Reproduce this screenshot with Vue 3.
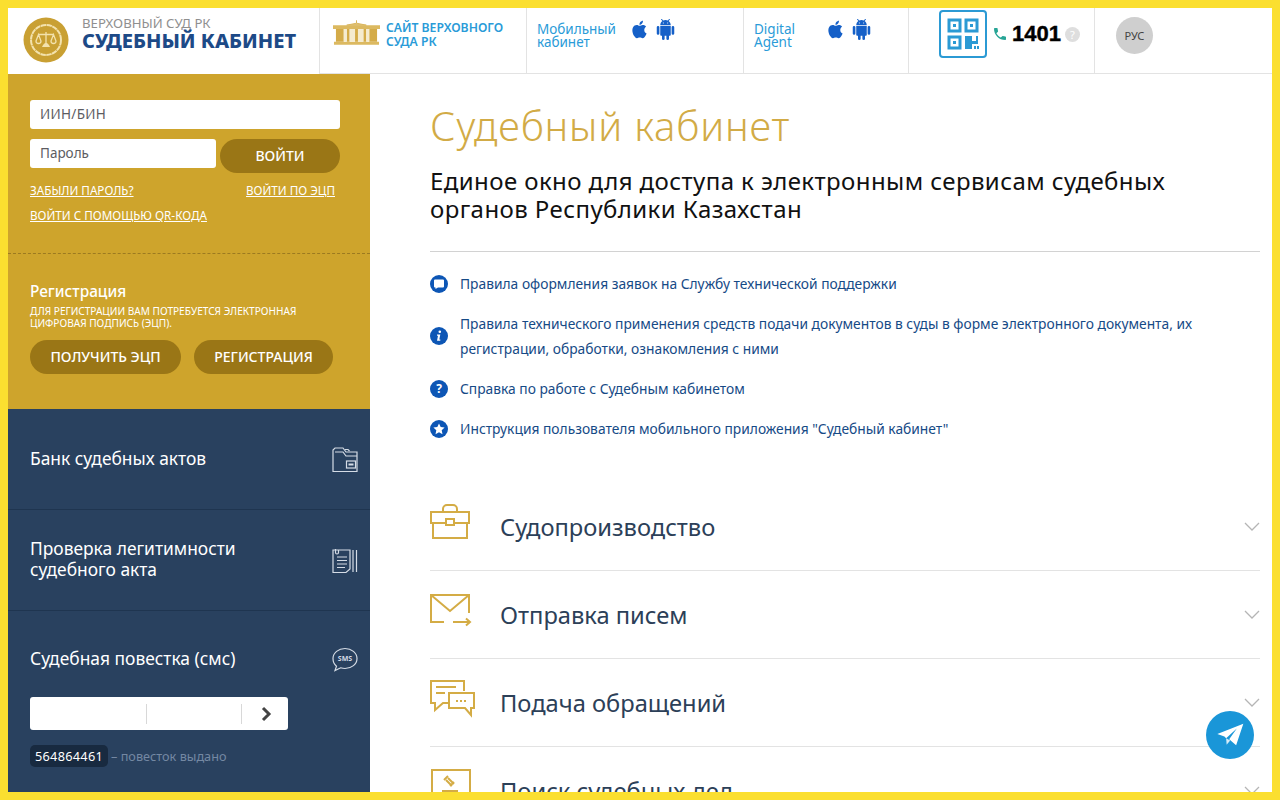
<template>
  <div class="page">
    <header class="top">
      <div class="cell brand">
        <svg class="logo" viewBox="0 0 46 46">
          <circle cx="23" cy="23" r="22.500" fill="#c9a033" />
          <circle cx="23" cy="23" r="15" fill="none" stroke="#f3e2ad" stroke-width="2" stroke-dasharray="5.400 .5" />
          <g fill="none" stroke="#f3e2ad" stroke-width="1.300">
            <path d="M23 15v13M15.500 17.500h15" />
            <path d="M13 24l2.500-6.500 2.500 6.500a2.500 2.500 0 0 1-5 0zM28 24l2.500-6.500 2.500 6.500a2.500 2.500 0 0 1-5 0z" />
          </g>
          <path d="M23 26c2 0 3 2 4 4h-8c1-2 2-4 4-4z" fill="#f3e2ad" />
        </svg>
        <div class="brand-text">
          <div class="brand-sub">ВЕРХОВНЫЙ СУД РК</div>
          <div class="brand-name">СУДЕБНЫЙ КАБИНЕТ</div>
        </div>
      </div>

      <a class="cell site">
        <svg class="building" viewBox="0 0 48 26">
          <path d="M24 0v3M14 5l10-2 10 2z" stroke="#d9b45a" stroke-width="1" fill="#e2c57c" />
          <path d="M0 5h48v4H0zM1 22h46v3H1z" fill="#dcb960" />
          <path d="M3 9h8v13H3zM37 9h8v13h-8z" fill="#d4ab48" />
          <path d="M14 9h3v13h-3zM22.500 9h3v13h-3zM31 9h3v13h-3z" fill="#d4ab48" />
          <path d="M11 9h3v13h-3zM17 9h5.500v13H17zM25.500 9H31v13h-5.500zM34 9h3v13h-3z" fill="#f5ebcf" />
        </svg>
        <span>САЙТ ВЕРХОВНОГО<br />СУДА РК</span>
      </a>

      <div class="cell app mobile">
        <span class="app-name">Мобильный<br />кабинет</span>
        <svg class="os" viewBox="0 0 24 24"><path :d="applePath" /></svg>
        <svg class="os" viewBox="0 0 24 24"><path :d="androidPath" /></svg>
      </div>

      <div class="cell app digital">
        <span class="app-name">Digital<br />Agent</span>
        <svg class="os" viewBox="0 0 24 24"><path :d="applePath" /></svg>
        <svg class="os" viewBox="0 0 24 24"><path :d="androidPath" /></svg>
      </div>

      <div class="cell phone">
        <div class="qr">
          <svg viewBox="0 0 32 32" width="32" height="32" fill="none" stroke="#2b9ad4" stroke-width="3">
            <rect x="2" y="2" width="11" height="11" />
            <rect x="19" y="2" width="11" height="11" />
            <rect x="2" y="19" width="11" height="11" />
            <path d="M6 6h3v3H6zM23 6h3v3h-3zM6 23h3v3H6z" fill="#2b9ad4" stroke="none" />
            <path d="M18 18h7v5h4v-5h2v8h-6v5h-7z" fill="#2b9ad4" stroke="none" />
            <path d="M27 28h2v3h-2zM30 28h2v3h-2z" fill="#2b9ad4" stroke="none" />
          </svg>
        </div>
        <svg class="tube" viewBox="0 0 24 24"><path d="M6.600 10.800c1.400 2.800 3.800 5.100 6.600 6.600l2.200-2.200c.3-.3.7-.4 1-.2 1.100.4 2.300.6 3.600.6.600 0 1 .4 1 1V20c0 .6-.4 1-1 1C10.600 21 3 13.400 3 4c0-.6.4-1 1-1h3.500c.6 0 1 .4 1 1 0 1.300.2 2.500.6 3.600.1.300 0 .7-.2 1z" /></svg>
        <span class="number">1401</span>
        <span class="hint">?</span>
      </div>

      <div class="cell lang">
        <span class="lang-btn">РУС</span>
      </div>
    </header>

    <div class="body">
      <aside class="side">
        <section class="login">
          <input class="field wide" placeholder="ИИН/БИН" />
          <div class="pass-row">
            <input class="field pass" placeholder="Пароль" />
            <button class="pill enter">ВОЙТИ</button>
          </div>
          <div class="link-row">
            <a>ЗАБЫЛИ ПАРОЛЬ?</a>
            <a class="ecp">ВОЙТИ ПО ЭЦП</a>
          </div>
          <a class="qr-link">ВОЙТИ С ПОМОЩЬЮ QR-КОДА</a>
        </section>

        <section class="reg">
          <h3>Регистрация</h3>
          <p>ДЛЯ РЕГИСТРАЦИИ ВАМ ПОТРЕБУЕТСЯ ЭЛЕКТРОННАЯ<br />ЦИФРОВАЯ ПОДПИСЬ (ЭЦП).</p>
          <div class="reg-btns">
            <button class="pill get">ПОЛУЧИТЬ ЭЦП</button>
            <button class="pill signup">РЕГИСТРАЦИЯ</button>
          </div>
        </section>

        <nav class="nav">
          <a class="nav-item">
            <span>Банк судебных актов</span>
            <svg class="nav-ico" viewBox="0 0 26 26" fill="none" stroke="#d5dce6" stroke-width="1.200">
              <path d="M1 24.500V3l2-2h8l3 4h11v19.500z" />
              <path d="M3 5h8l3 4h11M13 2.500h3l1.500 1.500" />
              <rect x="14.500" y="14" width="9" height="7" />
              <path d="M16.500 17.500h5" stroke-width="2" />
            </svg>
          </a>
          <a class="nav-item">
            <span>Проверка легитимности<br />судебного акта</span>
            <svg class="nav-ico" viewBox="0 0 26 26" fill="none" stroke="#d5dce6" stroke-width="1.200">
              <path d="M1 2h17v19l-4 3.500H1z" />
              <path d="M5 9h10M5 12.500h10M5 16h10M5 19.500h8M21 2v22M24.500 2v22" />
              <path d="M3.500 1v3.500a1.500 1.500 0 0 0 3 0V2" />
            </svg>
          </a>
          <div class="nav-item sms">
            <div class="sms-head">
              <span>Судебная повестка (смс)</span>
              <svg class="nav-ico" viewBox="0 0 26 26" fill="none" stroke="#d5dce6" stroke-width="1.200">
                <path d="M13 1.500c6.500 0 12 4.300 12 10s-5.500 10-12 10c-1.500 0-3-.3-4.300-.7L3 23.500l1.500-4.200C2.300 17.500 1 14.800 1 11.500c0-5.700 5.500-10 12-10z" />
                <text x="13" y="14.300" class="sms-txt">SMS</text>
              </svg>
            </div>
            <div class="sms-box">
              <span class="cellnum"></span>
              <span class="cellnum"></span>
              <svg class="go" viewBox="0 0 12 16"><path d="M3 2l6 6-6 6" fill="none" stroke="#444" stroke-width="3" /></svg>
            </div>
            <div class="stat"><b>564864461</b> <span>– повесток выдано</span></div>
          </div>
        </nav>
      </aside>

      <main class="main">
        <h1>Судебный кабинет</h1>
        <h2>Единое окно для доступа к электронным сервисам судебных органов Республики Казахстан</h2>
        <ul class="docs">
          <li v-for="d in docs" :key="d.kind">
            <svg class="doc-ico" viewBox="0 0 18 18">
              <circle cx="9" cy="9" r="9" fill="#0d56b5" />
              <path v-if="d.kind === 'chat'" d="M5 4.500h8a1 1 0 0 1 1 1v6a1 1 0 0 1-1 1H8l-2.500 1.500v-1.500H5a1 1 0 0 1-1-1v-6a1 1 0 0 1 1-1z" fill="#fff" />
              <path v-if="d.kind === 'info'" d="M9.800 3.500a1.300 1.300 0 1 1 0 2.600 1.300 1.300 0 0 1 0-2.600zM7 7.600h3.300l-1 5h1v1.200H7l1-5H7z" fill="#fff" />
              <text v-if="d.kind === 'help'" x="9" y="13.300" class="q">?</text>
              <path v-if="d.kind === 'star'" d="M9 3.500l1.700 3.600 3.900.5-2.900 2.700.8 3.900L9 12.300l-3.500 1.900.8-3.900L3.400 7.600l3.900-.5z" fill="#fff" />
            </svg>
            <a>{{ d.text }}</a>
          </li>
        </ul>
        <div class="acc">
          <div v-for="s in sections" :key="s.title" class="acc-row">
            <svg class="acc-ico" viewBox="0 0 46 40" fill="none" stroke="#d4ac45" stroke-width="2">
              <template v-if="s.icon === 'case'">
                <path d="M1 9h38v11H1zM3 20v15h34V20M13 9V6a4 4 0 0 1 4-4h6a4 4 0 0 1 4 4v3" />
                <rect x="16" y="16" width="8" height="6" fill="#fff" />
              </template>
              <template v-if="s.icon === 'mail'">
                <path d="M39 22V4H1v27h13M1 4l19 16L39 4M23 31h9" />
                <path d="M32 31h7M36 27.500l4 3.500-4 3.500" />
              </template>
              <template v-if="s.icon === 'talk'">
                <path d="M34 12V2H1v22h4v7l8-7h5" />
                <path d="M19 14h25v15h-3v7l-6-7H19zM6 8h20M6 14h9" />
                <path d="M26 22h2M30 22h2M34 22h2" />
              </template>
              <template v-if="s.icon === 'search'">
                <path d="M2 3h38v27H2z" />
                <path d="M12 24h16M22 19l-6-6M18 11l6 6M14 13l4-4M20 19l4-4" />
              </template>
            </svg>
            <span class="acc-title">{{ s.title }}</span>
            <svg class="chev" viewBox="0 0 16 10"><path d="M1 1l7 7 7-7" fill="none" stroke="#b5b5b5" stroke-width="1.300" /></svg>
          </div>
        </div>
      </main>
    </div>

    <a class="tg">
      <svg viewBox="0 0 24 24" width="32" height="32"><path d="M22 3.500L2.500 11.200l5.300 2 1.300 1.200 8-7.200-5.700 8 5.200 4.500z" fill="#fff" /><path d="M9.100 14.400l.4 5 2.600-3.200z" fill="#d6ecf8" /></svg>
    </a>
  </div>
</template>

<script setup>
const applePath = 'M18.710 19.500c-.83 1.240-1.710 2.450-3.050 2.470-1.340.03-1.770-.79-3.290-.79-1.530 0-2 .77-3.270.82-1.310.05-2.300-1.320-3.140-2.530C4.250 17 2.940 12.450 4.700 9.390c.87-1.520 2.430-2.480 4.120-2.510 1.280-.02 2.500.87 3.290.87.78 0 2.260-1.070 3.810-.91.65.03 2.470.26 3.640 1.980-.09.06-2.170 1.280-2.150 3.810.03 3.020 2.650 4.030 2.680 4.040-.03.07-.42 1.440-1.380 2.830M13 3.500c.73-.83 1.940-1.460 2.940-1.500.13 1.170-.34 2.350-1.040 3.190-.69.85-1.830 1.510-2.950 1.420-.15-1.150.41-2.350 1.050-3.110z'
const androidPath = 'M15,5H14V4H15M10,5H9V4H10M15.530,2.160L16.840,.85C17.030,.66 17.030,.34 16.840,.14C16.640,-.05 16.320,-.05 16.130,.14L14.650,1.620C13.850,1.230 12.950,1 12,1C11.040,1 10.140,1.230 9.340,1.630L7.850,.14C7.660,-.05 7.340,-.05 7.150,.14C6.950,.34 6.950,.66 7.150,.85L8.460,2.160C6.970,3.260 6,5 6,7H18C18,5 17,3.250 15.530,2.160M20.500,8A1.500,1.500 0 0,0 19,9.500V16.500A1.500,1.500 0 0,0 20.500,18A1.500,1.500 0 0,0 22,16.500V9.500A1.500,1.500 0 0,0 20.500,8M3.500,8A1.500,1.500 0 0,0 2,9.500V16.500A1.500,1.500 0 0,0 3.500,18A1.500,1.500 0 0,0 5,16.500V9.500A1.500,1.500 0 0,0 3.500,8M6,18A1,1 0 0,0 7,19H8V22.500A1.500,1.500 0 0,0 9.500,24A1.500,1.500 0 0,0 11,22.500V19H13V22.500A1.500,1.500 0 0,0 14.500,24A1.500,1.500 0 0,0 16,22.500V19H17A1,1 0 0,0 18,18V8H6V18Z'

const docs = [
  { kind: 'chat', text: 'Правила оформления заявок на Службу технической поддержки' },
  { kind: 'info', text: 'Правила технического применения средств подачи документов в суды в форме электронного документа, их регистрации, обработки, ознакомления с ними' },
  { kind: 'help', text: 'Справка по работе с Судебным кабинетом' },
  { kind: 'star', text: 'Инструкция пользователя мобильного приложения "Судебный кабинет"' }
]

const sections = [
  { title: 'Судопроизводство', icon: 'case' },
  { title: 'Отправка писем', icon: 'mail' },
  { title: 'Подача обращений', icon: 'talk' },
  { title: 'Поиск судебных дел', icon: 'search' }
]
</script>

<style>
html, body {
  margin: 0;
  background: #fff;
}
</style>

<style scoped>
.page {
  position: relative;
  box-sizing: border-box;
  width: 1280px;
  height: 800px;
  border: 8px solid #fbdf30;
  overflow: hidden;
  background: #fff;
  font-family: "Noto Sans", "Open Sans", sans-serif;
  color: #25405f;
}

/* шапка */
.top {
  display: flex;
  height: 66px;
  box-sizing: border-box;
}
.cell {
  display: flex;
  box-sizing: border-box;
  border-right: 1px solid #e3e3e3;
  border-bottom: 1px solid #e3e3e3;
}
.brand {
  width: 312px;
  align-items: center;
  padding: 0 0 2px 15px;
  border-bottom: none;
}
.logo {
  width: 46px;
  height: 46px;
  margin-right: 13px;
}
.brand-text {
  margin-bottom: 12px;
}
.brand-sub {
  font-size: 13.200px;
  line-height: 14px;
  color: #8f8f8f;
  white-space: nowrap;
}
.brand-name {
  font-size: 20px;
  line-height: 22px;
  font-weight: 800;
  color: #1d4a87;
  white-space: nowrap;
}
.site {
  width: 207px;
  padding: 13px 0 0 13px;
  font-size: 12.200px;
  line-height: 14px;
  font-weight: 600;
  color: #2a9bd8;
}
.building {
  width: 47px;
  height: 26px;
  margin: -1px 6px 0 0;
}
.app {
  padding: 15px 0 0 10px;
  gap: 5px;
}
.mobile { width: 217px; }
.digital { width: 165px; }
.app-name {
  font-size: 13.500px;
  line-height: 13px;
  color: #2a9bd8;
}
.mobile .app-name { width: 87px; }
.digital .app-name { width: 66px; }
.os {
  width: 21px;
  height: 21px;
  margin-top: -4px;
  fill: #1560c8;
}
.phone {
  width: 186px;
  align-items: center;
  padding: 0 0 13px 30px;
}
.qr {
  display: flex;
  align-items: center;
  justify-content: center;
  flex: none;
  box-sizing: border-box;
  width: 48px;
  height: 48px;
  border: 2px solid #2b9ad4;
  border-radius: 4px;
  margin-right: 5px;
}
.tube {
  width: 16px;
  height: 16px;
  fill: #27a596;
  margin-right: 4px;
}
.number {
  font-family: "Liberation Sans", sans-serif;
  font-size: 22px;
  font-weight: 700;
  color: #000;
  -webkit-text-stroke: .4px #000;
}
.hint {
  width: 15px;
  height: 15px;
  margin-left: 4px;
  border-radius: 50%;
  background: #dedede;
  color: #fff;
  font-size: 11px;
  line-height: 15px;
  text-align: center;
}
.lang {
  flex: 1;
  align-items: center;
  padding: 0 0 11px 21px;
  border-right: none;
}
.lang-btn {
  width: 37px;
  height: 37px;
  border-radius: 50%;
  background: #cfcfcf;
  color: #444;
  font-size: 11px;
  line-height: 37px;
  text-align: center;
}

/* левая колонка */
.body {
  display: flex;
  align-items: flex-start;
}
.side {
  flex: none;
  width: 362px;
}
.login {
  height: 180px;
  box-sizing: border-box;
  padding: 26px 30px 0 22px;
  background: #cea42c;
  border-bottom: 1px dashed #9c7a20;
}
.field {
  display: block;
  box-sizing: border-box;
  height: 29px;
  padding: 0 10px 2px;
  border: none;
  outline: none;
  border-radius: 3px;
  background: #fff;
  font: 13.500px "Noto Sans", sans-serif;
}
.field::placeholder {
  color: #5c5c62;
  opacity: 1;
}
.wide {
  width: 310px;
  letter-spacing: .3px;
}
.pass-row {
  display: flex;
  align-items: flex-start;
  gap: 4px;
  margin-top: 10px;
}
.pass {
  width: 186px;
}
.pill {
  height: 34px;
  padding: 0 0 2px;
  border: none;
  border-radius: 17px;
  background: #9a7616;
  color: #fff;
  font: 500 14px "Noto Sans", sans-serif;
}
.enter {
  width: 120px;
}
.link-row {
  display: flex;
  justify-content: space-between;
  margin: 10px 5px 0 0;
}
.login a {
  font-size: 11.700px;
  line-height: 15px;
  color: #fff;
  text-decoration: underline;
}
.qr-link {
  display: block;
  margin-top: 10px;
}
.reg {
  height: 155px;
  box-sizing: border-box;
  padding: 28px 22px 0;
  background: #cea42c;
  color: #fff;
}
.reg h3 {
  margin: 0;
  font-size: 15.400px;
  line-height: 20px;
  font-weight: 500;
}
.reg p {
  margin: 3px 0 0;
  font-size: 10.100px;
  line-height: 12px;
  white-space: nowrap;
}
.reg-btns {
  display: flex;
  gap: 13px;
  margin-top: 11px;
}
.get { width: 151px; }
.signup { width: 139px; }

.nav {
  background: #29415f;
  color: #fff;
  padding-bottom: 30px;
}
.nav-item {
  display: flex;
  align-items: center;
  justify-content: space-between;
  box-sizing: border-box;
  height: 101px;
  padding: 0 12px 2px 22px;
  border-bottom: 1px solid #1f3550;
  font-size: 17.400px;
  line-height: 21px;
}
.nav-ico {
  flex: none;
  width: 26px;
  height: 26px;
  margin-top: 3px;
}
.sms-txt {
  font: 700 7px "Noto Sans", sans-serif;
  fill: #d5dce6;
  stroke: none;
  text-anchor: middle;
}
.sms {
  display: block;
  height: auto;
  padding-top: 33px;
  border-bottom: none;
}
.sms-head {
  display: flex;
  align-items: center;
  justify-content: space-between;
}
.sms-box {
  display: flex;
  align-items: center;
  box-sizing: border-box;
  width: 258px;
  height: 33px;
  margin-top: 24px;
  border-radius: 3px;
  background: #fff;
}
.cellnum {
  width: 94px;
  height: 20px;
  border-right: 1px solid #d8d8d8;
}
.cellnum + .cellnum {
  margin-right: 18px;
}
.cellnum:first-child {
  width: 116px;
}
.go {
  width: 12px;
  height: 16px;
}
.stat {
  display: flex;
  align-items: center;
  gap: 3px;
  margin-top: 15px;
  font-size: 12.700px;
}
.stat b {
  padding: 0 5px;
  height: 22px;
  line-height: 22px;
  border-radius: 5px;
  background: #182a40;
  font-weight: 400;
  letter-spacing: .3px;
}
.stat span {
  color: #7488a3;
}

/* основная часть */
.main {
  flex: 1;
  min-width: 0;
  padding: 0 12px 0 60px;
}
h1 {
  margin: 24px 0 0;
  font-size: 40px;
  line-height: 56px;
  font-weight: 300;
  letter-spacing: .8px;
  color: #d2ab46;
}
h2 {
  margin: 13px 0 0;
  padding: 0 60px 28px 0;
  border-bottom: 1px solid #d2d2d2;
  font-size: 24px;
  line-height: 28px;
  font-weight: 400;
  letter-spacing: .42px;
  color: #111;
}
.docs {
  list-style: none;
  margin: 19px 0 0;
  padding: 0;
}
.docs li {
  display: flex;
  align-items: center;
  gap: 12px;
  margin-bottom: 15px;
  font-size: 13.800px;
  line-height: 25px;
  color: #164a86;
}
.doc-ico {
  flex: none;
  width: 18px;
  height: 18px;
}
.q {
  font: 700 12px "Noto Sans", sans-serif;
  fill: #fff;
  text-anchor: middle;
}
.acc {
  margin-top: 42px;
}
.acc-row {
  display: flex;
  align-items: center;
  height: 88px;
  box-sizing: border-box;
  border-bottom: 1px solid #e3e3e3;
}
.acc-ico {
  flex: none;
  width: 46px;
  height: 40px;
  margin: 0 24px 8px 0;
}
.acc-title {
  flex: 1;
  font-size: 23.700px;
  color: #2c4058;
}
.chev {
  width: 16px;
  height: 10px;
}

.tg {
  position: absolute;
  right: 18px;
  bottom: 33px;
  display: flex;
  align-items: center;
  justify-content: center;
  width: 48px;
  height: 48px;
  border-radius: 50%;
  background: #1a96d8;
}
</style>
